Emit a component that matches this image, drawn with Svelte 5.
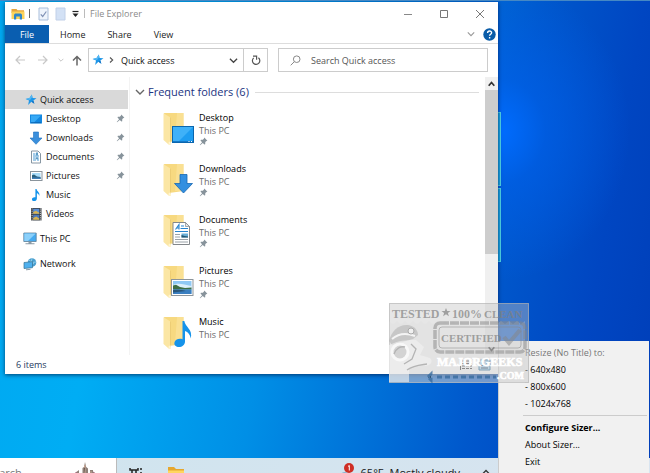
<script>
  const quickLinks = [
    { name: 'Desktop', icon: 'desktop', pinned: true },
    { name: 'Downloads', icon: 'downloads', pinned: true },
    { name: 'Documents', icon: 'documents', pinned: true },
    { name: 'Pictures', icon: 'pictures', pinned: true },
    { name: 'Music', icon: 'music', pinned: false },
    { name: 'Videos', icon: 'videos', pinned: false }
  ];
  const folders = quickLinks.slice(0, 5);
  const tabs = ['Home', 'Share', 'View'];
  const sizes = ['640x480', '800x600', '1024x768'];
</script>

{#snippet star()}
  <svg width="12" height="12" viewBox="0 0 12 12" aria-hidden="true">
    <path d="M6.8 .6 7.7 4l3.8.3-3.2 2.1 1.1 3.4-3-2-3.3 3.1.9-4.3L.6 4.9l3.9-.8z" fill="#1d96e8" />
    <path d="M.6 4.9l3.9-.8L6.8.6 7.3 3 5 6z" fill="#55b8f2" />
    <path d="M8.3 6.4l1.1 3.4-3-2z" fill="#1272c4" />
  </svg>
{/snippet}

{#snippet pin()}
  <svg class="pin" width="9" height="9" viewBox="0 0 9 9" aria-hidden="true">
    <path d="M5.3.6 8.4 3.7 7.5 4 6.3 5.1 6.2 7.2 5.4 7.5 3.8 5.9 1.1 8.3.7 7.9 3.1 5.2 1.5 3.6 1.9 2.8 3.9 2.7 5 1.5z" fill="#87939b" />
  </svg>
{/snippet}

{#snippet smallIcon(kind)}
  <svg width="14" height="14" viewBox="0 0 14 14" aria-hidden="true">
    {#if kind === 'desktop'}
      <rect x="1" y="2.5" width="12" height="9" fill="#1287e0" />
      <path d="M2 3.5h10L5 10.5H2z" fill="#37a9f5" />
      <path d="M2 10.7h10" stroke="#0a5da8" stroke-width=".8" />
    {:else if kind === 'downloads'}
      <path d="M4.5 1h5v6H13l-6 6.3L1 7h3.500z" fill="#3a8fdc" stroke="#1d70bf" stroke-width=".6" />
    {:else if kind === 'documents'}
      <path d="M2.500 1h6.500l2.500 2.500V13h-9z" fill="#fff" stroke="#7b8b98" stroke-width=".9" />
      <path d="M4 4h2.500M4 6h6M4 8h2M4 10h3M8 10h2" stroke="#4a9ad4" />
      <path d="M7 2.500h2v3H7zM6.500 7.200h3v2h-3z" fill="#5d9cc6" />
    {:else if kind === 'pictures'}
      <rect x="1.500" y="2.500" width="11.500" height="9" fill="#fff" stroke="#8a949c" />
      <rect x="3" y="4" width="8.500" height="6" fill="#a8dbf8" />
      <path d="M3 6.200 5 5.500l3 2 3.500.5v2H3z" fill="#285f7c" />
      <path d="M3 8.500h8.500V10H3z" fill="#3e7fb8" />
    {:else if kind === 'music'}
      <path d="M6.400 1h1.200c.2 2.700 3.600 3 2.700 7-.4-1.700-1-2.400-2.400-2.800v5.300c0 1.600-1.300 2.600-2.900 2.600S2.800 12.200 3 11c.2-1.300 1.800-2.200 3.400-1.700z" fill="#1593ea" />
    {:else if kind === 'videos'}
      <rect x="2" y="1" width="10.500" height="12.500" fill="#3b4046" />
      <rect x="4.200" y="1.800" width="6" height="5" fill="#5b8fd6" />
      <rect x="4.200" y="7.700" width="6" height="5" fill="#4b79bb" />
      <path d="M4.200 5 7 3.800l3.200 2v1h-6zM4.200 11l3-1.400 3 2v1.100h-6z" fill="#d8b24e" />
      <path d="M3.100 1.500v12M11.400 1.500v12" stroke="#e8e8e8" stroke-width=".9" stroke-dasharray="1 1.200" />
    {/if}
  </svg>
{/snippet}

{#snippet folderIcon(kind)}
  <svg width="31" height="35" viewBox="0 0 31 35" aria-hidden="true">
    <path d="M1 2h19.500v27L6 31z" fill="#f7d980" />
    <path d="M14 2h6.500v27H12z" fill="#fbe39b" opacity=".7" />
    <path d="M.5 2.300 7.500 6.500v27.500L5.600 33.400.5 29z" fill="#fbe6a4" />
    <path d="M7.500 6.500V31.500" stroke="#e8c569" stroke-width=".7" />
    <path d="M5.600 33.400v-2.200l1.900-.9V34z" fill="#fff4cf" />
    {#if kind === 'desktop'}
      <rect x="9.500" y="15.500" width="21" height="16" fill="#1e9df1" stroke="#0a66ae" />
      <path d="M10 16h20L16 30h-6z" fill="#3fb1f8" />
      <path d="M10 30.500h20" stroke="#1579c8" />
      <path d="M25.500 30.500h1M28 30.500h1" stroke="#fff" />
    {:else if kind === 'downloads'}
      <path d="M17 12.500h7v9h5.500L20.500 31l-9-9.500H17z" fill="#338fe0" stroke="#1767b2" stroke-width=".8" />
    {:else if kind === 'documents'}
      <path d="M10 9.500h12.500l4 4v18H10z" fill="#fff" stroke="#83878b" />
      <path d="M22.500 9.500v4h4z" fill="#e3e7ea" stroke="#83878b" stroke-width=".7" />
      <path d="M12.500 16.500l3.500-5v5M13.700 15H16M18 13h3M17.500 15.500H25M12 18.500h13" stroke="#2684cf" stroke-width="1.100" fill="none" />
      <path d="M12 21.500h5M12 24h5M12 26.500h13M12 29h13" stroke="#9aa2a8" />
      <rect x="18.500" y="20.500" width="6.500" height="4" fill="#6aafd8" />
      <path d="M18.500 22l3 1 3.500.5v1h-6.500z" fill="#24566f" />
    {:else if kind === 'pictures'}
      <rect x="8.500" y="15.500" width="21.500" height="16" fill="#fff" stroke="#8d959b" />
      <rect x="10" y="17" width="18.500" height="13" fill="#8fc9f5" />
      <path d="M10 21c5-2.500 10-1 18.500 1v3H10z" fill="#dcf0fb" />
      <path d="M10 21.500l3-.8 4 2.300 5 1 6.500-.4v2H10z" fill="#3d6f45" />
      <path d="M10 25.500h18.500V30H10z" fill="#3b7fc0" />
      <path d="M10 26c6-1 12 .5 13 1l-13 1.500z" fill="#29567a" />
    {:else if kind === 'music'}
      <path d="M19.500 6h1.800c.8 6 9 8.500 6.400 17.500-.6-4-2.600-6.300-5.700-7.500v10.500c0 3.500-3 5.500-6 5.500s-5-1.800-4.600-4.300c.5-3 4.400-4.700 8.100-3.500z" fill="#1593ea" />
    {/if}
  </svg>
{/snippet}

{#snippet chevron(size, color)}
  <svg width={size} height={size} viewBox="0 0 10 10" aria-hidden="true">
    <path d="M1 3l4 4 4-4" fill="none" stroke={color} stroke-width="1.400" />
  </svg>
{/snippet}

<main class="screen">
  <div class="pane-logo" aria-hidden="true"><i></i><i></i></div>

  <section class="window" aria-label="File Explorer">
    <header class="titlebar">
      <svg width="14" height="12" viewBox="0 0 14 12" aria-hidden="true">
        <path d="M.5 1h5l1 1.300h6.500V5H.5z" fill="#e6a53a" />
        <path d="M.5 3.500h13V11H.5z" fill="#fbd35c" />
        <path d="M3 11.500V7.500C3 6 4 5.500 5 5.500h4c1.200 0 2 .6 2 2v4H8.800V8.500H5.200v3z" fill="#2e86c9" />
      </svg>
      <span class="bar"></span>
      <button class="quick" aria-label="Properties">
        <svg width="11" height="14" viewBox="0 0 11 14"><path d="M1 1h9v12H1z" fill="#eef4fc" stroke="#a9bedb" /><path d="M2.800 7.300 4.700 9.500 8.300 4.500" fill="none" stroke="#7f91b5" stroke-width="1.200" /></svg>
      </button>
      <button class="quick" aria-label="New folder">
        <svg width="11" height="14" viewBox="0 0 11 14"><path d="M1 1h9v12H1z" fill="#d3e1f5" stroke="#c1d0e8" /></svg>
      </button>
      <button class="quick caret" aria-label="Customize toolbar">
        <svg width="7" height="8" viewBox="0 0 7 8"><path d="M.5 1.500h6" stroke="#222" stroke-width="1.200" /><path d="M.5 3.500h6L3.500 7z" fill="#222" /></svg>
      </button>
      <span class="bar light"></span>
      <span class="title">File Explorer</span>
      <div class="controls">
        <button aria-label="Minimize"><svg width="10" height="10" viewBox="0 0 10 10"><path d="M1 5.500h8" stroke="#888" /></svg></button>
        <button aria-label="Maximize"><svg width="10" height="10" viewBox="0 0 10 10"><path d="M1.500 1.500h7v7h-7z" fill="none" stroke="#777" /></svg></button>
        <button aria-label="Close"><svg width="10" height="10" viewBox="0 0 10 10"><path d="M1 1l8 8M9 1 1 9" stroke="#777" /></svg></button>
      </div>
    </header>

    <nav class="ribbon" aria-label="Ribbon">
      <button class="file">File</button>
      {#each tabs as tab}
        <button class="tab">{tab}</button>
      {/each}
      <button class="expand" aria-label="Expand ribbon">{@render chevron(8, '#999')}</button>
      <button aria-label="Help">
        <svg width="13" height="13" viewBox="0 0 13 13"><circle cx="6.500" cy="6.500" r="6.200" fill="#0a5ca8" /><path d="M4.600 5c0-2.600 4-2.500 4-.3 0 1.500-2 1.500-2 3.100M6.600 9v1.400" fill="none" stroke="#fff" stroke-width="1.400" /></svg>
      </button>
    </nav>

    <div class="toolbar">
      <button class="wide" aria-label="Back"><svg width="10" height="10" viewBox="0 0 10 10"><path d="M10 5H1M5 1 1 5l4 4" fill="none" stroke="#c8c8c8" stroke-width="1.200" /></svg></button>
      <button class="wide" aria-label="Forward"><svg width="10" height="10" viewBox="0 0 10 10"><path d="M0 5h9M5 1l4 4-4 4" fill="none" stroke="#c8c8c8" stroke-width="1.200" /></svg></button>
      <button class="narrow" aria-label="Recent locations">{@render chevron(6, '#bbb')}</button>
      <button class="up" aria-label="Up"><svg width="10" height="11" viewBox="0 0 10 11"><path d="M5 10.500V1.500M1 5.500l4-4 4 4" fill="none" stroke="#666" stroke-width="1.500" /></svg></button>
      <div class="address">
        {@render star()}
        <svg width="5" height="8" viewBox="0 0 5 8" aria-hidden="true"><path d="M1 1.500 3.700 4 1 6.500" fill="none" stroke="#555" stroke-width="1.100" /></svg>
        <button class="crumb">Quick access</button>
        <button class="drop" aria-label="Previous locations">{@render chevron(9, '#444')}</button>
        <button class="refresh" aria-label="Refresh">
          <svg width="10" height="11" viewBox="0 0 10 11"><path d="M7.400 2.800A3.700 3.700 0 1 1 2.700 2.900" fill="none" stroke="#555" stroke-width="1.200" /><path d="M2 1.200h3.600v3.600" fill="none" stroke="#555" stroke-width="1.200" /></svg>
        </button>
      </div>
      <label class="search">
        <svg width="11" height="11" viewBox="0 0 11 11" aria-hidden="true"><circle cx="6.700" cy="4.200" r="3.300" fill="none" stroke="#888" /><path d="M4.300 6.700.7 10.300" stroke="#888" /></svg>
        <input type="search" placeholder="Search Quick access" aria-label="Search Quick access" />
      </label>
    </div>

    <div class="body">
      <nav class="sidebar" aria-label="Folders">
        <a class="root current" href="#quick">{@render star()}<span>Quick access</span></a>
        {#each quickLinks as link}
          <a class="leaf" href="#{link.icon}">
            {@render smallIcon(link.icon)}
            <span>{link.name}</span>
            {#if link.pinned}{@render pin()}{/if}
          </a>
        {/each}
        <a class="root apart" href="#pc">
          <svg width="14" height="13" viewBox="0 0 14 13" aria-hidden="true"><path d="M.8 1h12.400v8.500H.8z" fill="#45aaf0" stroke="#5f7f96" stroke-width=".8" /><path d="M1.300 1.500h11.400L5 9H1.300z" fill="#8bd0fa" /><path d="M5.500 9.800h3v1.400h-3zM2.500 11.200h9v1h-9z" fill="#8a9aa6" /></svg>
          <span>This PC</span>
        </a>
        <a class="root apart" href="#network">
          <svg width="14" height="14" viewBox="0 0 14 14" aria-hidden="true"><circle cx="9" cy="5.500" r="4.300" fill="#4a9fce" /><path d="M6 3l5 4M9 1.500l-2 8M5 6l8-1" stroke="#a6dcf5" stroke-width=".7" /><path d="M1 5.500l8.500-.8v6L1 11.500z" fill="#4eb0ee" stroke="#38718f" stroke-width=".7" /><path d="M3 12.800l4.500-.5" stroke="#8a9aa6" /></svg>
          <span>Network</span>
        </a>
      </nav>

      <section class="content">
        <h2>{@render chevron(10, '#666')}<span>Frequent folders (6)</span><i></i></h2>
        <div class="folders">
          {#each folders as folder}
            <button class="folder">
              {@render folderIcon(folder.icon)}
              <span class="meta">
                <span class="name">{folder.name}</span>
                <span class="place">This PC</span>
                {#if folder.pinned}{@render pin()}{/if}
              </span>
            </button>
          {/each}
        </div>
      </section>

      <div class="scrollbar">
        <button aria-label="Scroll up"><svg width="7" height="6" viewBox="0 0 7 6"><path d="M.7 4.800 3.500 1.500l2.800 3.300" fill="none" stroke="#333" stroke-width="1.700" /></svg></button>
        <div class="track"><div class="thumb"></div></div>
        <button aria-label="Scroll down"><svg width="7" height="6" viewBox="0 0 7 6"><path d="M.7 1.200 3.500 4.500l2.800-3.300" fill="none" stroke="#333" stroke-width="1.700" /></svg></button>
      </div>
    </div>

    <footer class="status">
      <span>6 items</span>
      <button aria-label="Details view"><svg width="13" height="12" viewBox="0 0 13 12"><path d="M.5 1v10" stroke="#333" /><path d="M2 2h3M2 4.500h3M2 7h3M2 9.500h3M6 2h3M6 4.500h3M6 7h3M6 9.500h3M10 2h2M10 4.500h2M10 7h2M10 9.500h2" stroke="#333" /></svg></button>
      <button aria-label="Large icons view"><svg width="13" height="12" viewBox="0 0 13 12"><path d="M1 1h11v10H1z" fill="#a9d6f3" stroke="#246a9c" /><path d="M3 4h3M3 6.500h7M3 9h7M8 4h2" stroke="#135" /></svg></button>
    </footer>
  </section>

  <footer class="taskbar">
    <div class="tasksearch">
      <span>earch</span>
      <svg width="22" height="12" viewBox="0 0 22 12" aria-hidden="true"><path d="M8.500 12V6L10 5l1-5 1.200 5L14 6.500V12zM3 12V9.500l2-1.500V12zM16 12V8h3v4z" fill="#8f8078" /><path d="M10 6l1-3v9M17 9v3" stroke="#c8a898" /><path d="M0 12l3-2M19 10l3 2" stroke="#8e5866" /></svg>
    </div>
    <svg class="task-view" width="14" height="10" viewBox="0 0 14 10" aria-hidden="true"><path d="M1 1v2h8V1M1 10V7h8v3M3 3v4M7 3v4M12 1v2M12 5v5" fill="none" stroke="#222" stroke-width="1.500" /></svg>
    <svg class="task-folder" width="18" height="10" viewBox="0 0 18 10" aria-hidden="true"><path d="M1 1h6l2 2h8v7H1z" fill="#e6a72f" /><path d="M1 4.500h16V10H1z" fill="#ffd65f" /></svg>
    <div class="weather">
      <svg width="16" height="14" viewBox="0 0 16 14" aria-hidden="true"><path d="M1 14c0-5 5-6 8-4l3 4z" fill="#8db4cf" /><circle cx="10" cy="5" r="5" fill="#cf2e25" /><path d="M9 3.500l1.300-1v5" fill="none" stroke="#fff" /></svg>
      <span>65°F</span><span>Mostly cloudy</span>
      <svg width="8" height="6" viewBox="0 0 8 6" aria-hidden="true"><path d="M1 4.500l3-3 3 3" fill="none" stroke="#333" stroke-width="1.300" /></svg>
    </div>
  </footer>

  <div class="menu" role="menu">
    <button role="menuitem" disabled>Resize (No Title) to:</button>
    {#each sizes as size}
      <button role="menuitem">- {size}</button>
    {/each}
    <hr />
    <button role="menuitem" class="default">Configure Sizer...</button>
    <button role="menuitem">About Sizer...</button>
    <button role="menuitem">Exit</button>
  </div>

  <svg class="stamp" width="140" height="80" viewBox="0 0 140 80" aria-label="Tested 100% clean, certified MajorGeeks.com">
    <rect x=".5" y=".5" width="139" height="79" fill="#c4c4c4" fill-opacity=".42" stroke="#b4b4b4" stroke-opacity=".7" />
    <path d="M0 18l4 3 4-3 4 3 4-3 4 3 4-3 4 3 4-3 4 3 4-3 4 3 4-3 4 3 4-3 4 3 4-3 4 3 4-3 4 3 4-3 4 3 4-3 4 3 4-3 4 3 4-3 4 3 4-3 4 3 4-3 4 3 4-3 4 3 4-3V80H0z" fill="#ddd" opacity=".25" />
    <g fill="#808080" fill-opacity=".7" font-family="'Liberation Serif', serif" font-weight="700">
      <text x="3" y="15" font-size="12">TESTED</text>
      <path d="M57 5l1.200 3h3.300l-2.600 2 1 3.200-2.900-2-2.900 2 1-3.200-2.600-2h3.300z" />
      <text x="63" y="15" font-size="12">100%</text>
      <text x="95" y="15" font-size="11">CLEAN</text>
    </g>
    <g fill="none" stroke="#858585" stroke-opacity=".5">
      <rect x="46" y="20" width="90" height="29" rx="5" stroke-width="3.500" stroke-dasharray="9 1" />
      <rect x="50" y="24" width="82" height="21" rx="3" />
      <path d="M115 34l5 6 11-13" stroke-width="4" />
    </g>
    <text x="52" y="39" font-size="11" font-weight="700" font-family="'Liberation Serif', serif" fill="#808080" fill-opacity=".7">CERTIFIED</text>
    <g>
      <path d="M0 38c2-10 10-17 19-16 6 1 10 5 10 10l-5 4L3 42z" fill="#b4b4b4" opacity=".6" />
      <path d="M3 36c7-6 15-6 23-3" fill="none" stroke="#f4f4f4" stroke-width="2" />
      <circle cx="22" cy="28" r="3" fill="#f0f0f0" stroke="#aaa" />
      <path d="M0 42l5-2c7-3 15-3 22-3l8 7-4 8 10 3c4 4 0 7-4 8l-9-1-8 4 0 13H0z" fill="#f2f2f2" opacity=".6" />
      <circle cx="11" cy="49" r="8" fill="#d3d3d3" stroke="#f8f8f8" stroke-width="3" />
      <path d="M5 51c2-6 7-8 11-7M22 41l5 5-4 10-8 5M18 67c7-5 14-5 20-6" fill="none" stroke="#b4b4b4" stroke-width="1.300" />
    </g>
    <g fill="#fff" stroke="#fff" stroke-width=".6" font-family="'Liberation Serif', serif" font-weight="700">
      <text x="48" y="63" font-size="12">MAJORGEEKS</text>
      <text x="108" y="76" font-size="10">.COM</text>
    </g>
    <path d="M39 74l3-3v6zM48 74h59" stroke="#35699c" stroke-width="3" stroke-dasharray="5 3" opacity=".75" />
  </svg>
</main>

<style>
  :global(body) { margin: 0; }
  .screen {
    position: relative;
    box-sizing: border-box;
    min-height: 100vh;
    overflow: hidden;
    border-top: 1px solid #4688c4;
    font: 9px/13px 'Open Sans', 'Noto Sans', sans-serif;
    color: #1a1a1a;
    background:
      radial-gradient(ellipse 130px 150px at 500px 130px, #006cff 0%, rgba(0, 98, 240, .55) 35%, rgba(0, 80, 220, 0) 100%),
      linear-gradient(100deg, #00a8f0 0%, #00adf4 20%, #008fe6 44%, #0058cc 74%, #0046c2 88%, #003eb8 100%);
  }
  button {
    display: flex;
    align-items: center;
    justify-content: center;
    margin: 0;
    padding: 0;
    border: 0;
    background: none;
    color: inherit;
    font: inherit;
  }
  svg { flex: none; }
  .pane-logo {
    position: absolute;
    top: 111px;
    left: 489px;
    display: flex;
    flex-direction: column;
    gap: 2px;
  }
  .pane-logo i { width: 10px; height: 72px; border: 1px solid #4fd6e8; background: #19a5e4; }
  .window {
    position: absolute;
    top: 1px;
    left: 5px;
    right: 152px;
    background: #fff;
    box-shadow: 0 1px 4px rgba(0, 20, 60, .7);
  }
  .titlebar { display: flex; align-items: center; height: 23px; padding-left: 6px; }
  .bar { width: 1px; height: 9px; margin: 0 8px 0 4px; background: #666; }
  .bar.light { margin: 0 5px; background: #bbb; }
  .quick { margin-right: 6px; }
  .quick.caret { margin: 0; }
  .title { color: #8a8a8a; }
  .controls { display: flex; margin-left: auto; }
  .controls button { width: 36px; height: 23px; }
  .ribbon {
    display: flex;
    align-items: stretch;
    height: 18px;
    padding-right: 2px;
    border-bottom: 1px solid #ddd;
    color: #222;
  }
  .file { width: 44px; background: #0a5eb0; color: #fff; }
  .tab { padding: 0 11px; }
  .expand { margin-left: auto; margin-right: 8px; }
  .toolbar { display: flex; align-items: center; gap: 5px; padding: 4px 10px 5px 6px; }
  .wide { width: 18px; }
  .narrow { width: 8px; }
  .up { width: 13px; }
  .address, .search {
    display: flex;
    align-items: center;
    box-sizing: border-box;
    min-width: 0;
    height: 24px;
    border: 1px solid #ccc;
  }
  .address { flex: 1 1 180px; gap: 5px; padding-left: 3px; color: #111; }
  .crumb { margin-left: 2px; white-space: nowrap; }
  .drop { margin-left: auto; }
  .refresh { align-self: stretch; width: 24px; border-left: 1px solid #ccc; }
  .search { flex: 1 1 210px; gap: 10px; margin-left: 5px; padding: 0 11px; }
  .search input {
    flex: 1;
    min-width: 0;
    padding: 0;
    border: 0;
    outline: 0;
    background: none;
    font: inherit;
  }
  .search input::placeholder { color: #555; opacity: 1; }
  .body { display: flex; align-items: stretch; }
  .sidebar { flex: none; width: 125px; padding: 13px 0; box-sizing: border-box; border-right: 1px solid #f3f3f3; }
  .sidebar a {
    display: flex;
    align-items: center;
    gap: 3px;
    height: 19px;
    color: #111;
    text-decoration: none;
    white-space: nowrap;
  }
  .sidebar .root { padding-left: 18px; }
  .sidebar .current { padding-left: 20px; margin-right: 1px; background: #d9d9d9; }
  .root.apart { margin-top: 6px; }
  .leaf { padding: 0 4px 0 24px; }
  .leaf .pin { margin-left: auto; }
  .content { flex: 1; min-width: 0; padding: 7px 6px 0 5px; }
  h2 { display: flex; align-items: center; gap: 3px; margin: 0; font-size: 11px; font-weight: 400; line-height: 16px; color: #22347f; }
  h2 i { flex: 1; height: 1px; margin-left: 3px; background: #ddd; }
  .folders { display: flex; flex-direction: column; padding: 11px 0 0 28px; }
  .folder { align-items: flex-start; justify-content: flex-start; gap: 5px; height: 51px; text-align: left; }
  .folder:last-child { height: 40px; }
  .meta { display: flex; flex-direction: column; align-items: flex-start; }
  .name { color: #000; }
  .place { color: #6b6b6b; }
  .scrollbar { display: flex; flex-direction: column; flex: none; width: 13px; background: #f0f0f0; }
  .scrollbar button { height: 13px; }
  .track { flex: 1; }
  .thumb { height: 65%; background: #cdcdcd; }
  .status { display: flex; align-items: center; gap: 5px; height: 19px; padding: 0 7px 0 11px; color: #26395e; }
  .status span { margin-right: auto; }
  .taskbar {
    position: absolute;
    left: 0;
    right: 0;
    bottom: 0;
    display: flex;
    align-items: flex-start;
    height: 15px;
    overflow: hidden;
    background: linear-gradient(90deg, #cfe4ee, #d8e4f0);
    font-size: 11px;
    line-height: 14px;
  }
  .tasksearch { display: flex; box-sizing: border-box; width: 117px; height: 15px; padding: 4px 20px 0 0; border-right: 1px solid #bbb; background: #fff; color: #777; }
  .tasksearch span { margin: 4px auto 0 -7px; }
  .task-view { margin: 9px 0 0 12px; }
  .task-folder { margin: 8px 0 0 24px; }
  .weather { display: flex; gap: 6px; margin: 5px 160px 0 auto; white-space: nowrap; }
  .weather span { padding-top: 3px; }
  .weather svg:last-child { margin: 6px 0 0 16px; }
  .menu {
    position: absolute;
    right: 1px;
    bottom: 0;
    box-sizing: border-box;
    width: 151px;
    padding: 3px 2px;
    border-left: 1px solid #ccc;
    background: #f1f1f1;
    color: #000;
  }
  .menu button { justify-content: flex-start; width: 100%; height: 17px; padding-left: 24px; white-space: nowrap; }
  .menu button:disabled { color: #777; }
  .menu .default { font-weight: 700; }
  hr { height: 1px; margin: 3px 0 3px 22px; border: 0; background: #ccc; }
  .stamp { position: absolute; right: 121px; bottom: 90px; pointer-events: none; }
</style>
